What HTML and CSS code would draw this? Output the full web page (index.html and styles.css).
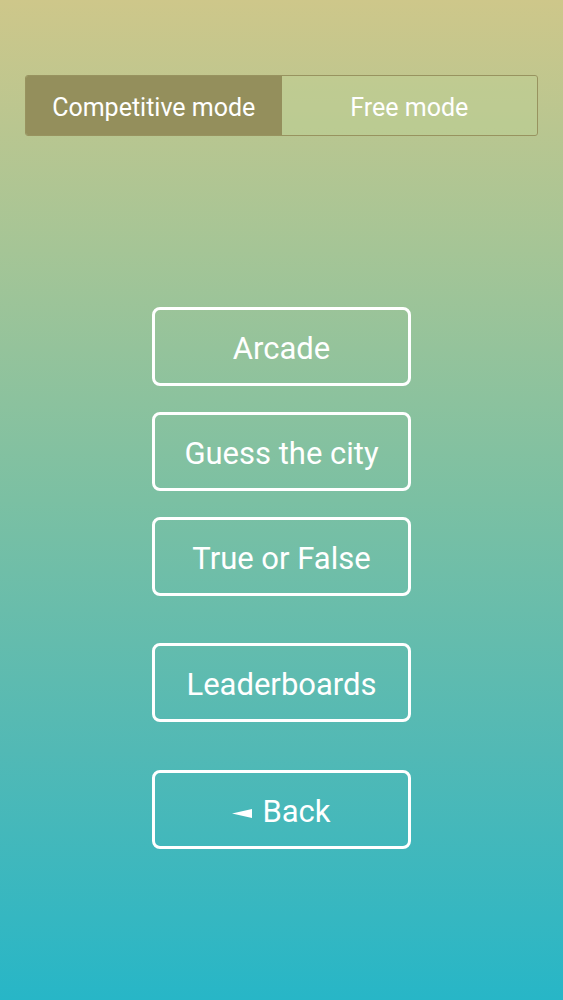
FILE: index.html
```html
<!DOCTYPE html>
<html>
<head>
<meta charset="utf-8">
<link rel="stylesheet" href="styles.css">
</head>
<body>
<div class="screen">
  <div class="segment">
    <div class="seg seg-active">Competitive mode</div>
    <div class="seg">Free mode</div>
  </div>
  <div class="menu">
    <div class="group">
      <button class="btn">Arcade</button>
      <button class="btn">Guess the city</button>
      <button class="btn">True or False</button>
    </div>
    <button class="btn">Leaderboards</button>
    <button class="btn btn-back"><svg class="arrow" width="20" height="9" viewBox="0 0 20 9"><polygon points="0,4.5 20,0 20,9" fill="#fff"/></svg>Back</button>
  </div>
</div>
</body>
</html>
```
FILE: styles.css
```css
html, body {
  margin: 0;
  padding: 0;
}
body {
  font-family: Roboto, "Liberation Sans", sans-serif;
}
.screen {
  width: 563px;
  height: 1000px;
  box-sizing: border-box;
  padding: 75px 25px 0;
  background: linear-gradient(to bottom, #cec78a 0%, #a5c596 25%, #7bc0a3 50%, #52b9b5 75%, #27b6c7 100%);
}
.segment {
  display: flex;
  height: 61px;
  box-sizing: border-box;
  border: 1px solid #98935f;
  border-radius: 3px;
  overflow: hidden;
}
.seg {
  flex: 1;
  display: flex;
  align-items: center;
  justify-content: center;
  color: #fff;
  font-size: 25px;
  padding-top: 4px;
  background: rgba(190, 210, 150, 0.4);
}
.seg-active {
  background: #948f5c;
}
.menu {
  margin-top: 171px;
  display: flex;
  flex-direction: column;
  align-items: center;
  gap: 47px;
}
.group {
  display: flex;
  flex-direction: column;
  gap: 26px;
}
.btn {
  width: 259px;
  height: 79px;
  box-sizing: border-box;
  border: 3px solid #fff;
  border-radius: 8px;
  background: transparent;
  color: #fff;
  font-family: Roboto, "Liberation Sans", sans-serif;
  font-size: 31px;
  display: flex;
  align-items: center;
  justify-content: center;
  padding: 4px 0 0;
}
.btn-back {
  margin-top: 1px;
}
.arrow {
  margin-right: 10px;
  margin-top: 3px;
}
```
